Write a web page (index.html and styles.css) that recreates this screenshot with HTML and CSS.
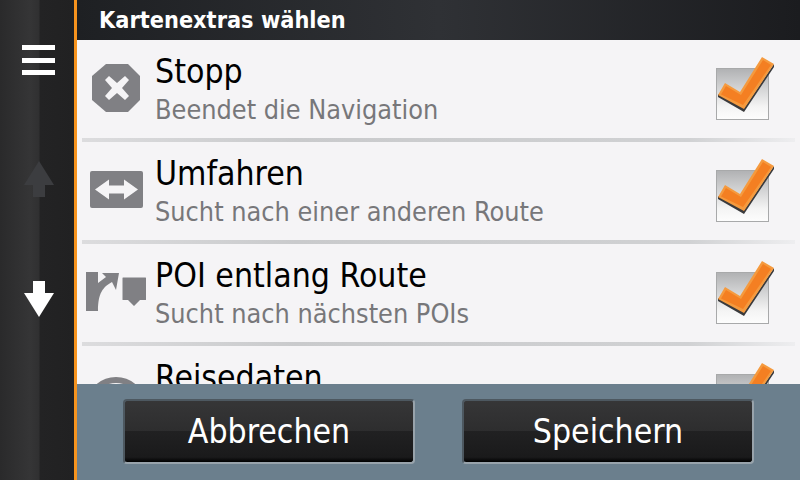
FILE: index.html
```html
<!DOCTYPE html>
<html lang="de">
<head>
<meta charset="utf-8">
<title>Kartenextras wählen</title>
<link rel="stylesheet" href="styles.css">
</head>
<body>
<svg class="defs" width="0" height="0">
  <defs>
    <linearGradient id="b" x1="0" y1="0" x2="0" y2="1"><stop offset="0" stop-color="#b0b1b3"/><stop offset="0.75" stop-color="#f4f4f4"/><stop offset="1" stop-color="#fdfdfd"/></linearGradient>
    <symbol id="check" viewBox="0 0 62 66">
      <rect x="2.500" y="13.500" width="52" height="51" fill="url(#b)" stroke="#a8a9aa"/>
      <path d="M4 39L4 42L30 57L60 12L60 9L30 53Z" fill="#3a3a3c"/>
      <path d="M4 40L11 28L26 37L48 2L60 9L30 54Z" fill="#f59a3e"/>
      <path d="M7 39.500L12 31L27 40L49 5L57 10L29 50Z" fill="#f47f22"/>
    </symbol>
  </defs>
</svg>
<div class="app">
  <aside class="side">
    <div class="menu"><span></span><span></span><span></span></div>
    <svg class="arrow up" width="30" height="36" viewBox="0 0 30 36"><path d="M15 0L30 24H21V36H9V24H0Z" fill="#3c3d40"/></svg>
    <svg class="arrow down" width="30" height="36" viewBox="0 0 30 36"><path d="M9 0H21V12H30L15 36L0 12H9Z" fill="#fff"/></svg>
  </aside>
  <main class="main">
    <header class="head">Kartenextras wählen</header>
    <div class="list">
      <div class="row">
        <svg class="ico" width="60" height="70" viewBox="0 0 60 70"><path d="M21 15H43L55 27V51L43 63H21L7 51V27Z" fill="#808084"/><path d="M24 27L32 34L40 27L44 31L37 39L44 47L40 51L32 44L24 51L20 47L27 39L20 31Z" fill="#f5f4f6"/></svg>
        <div class="txt"><div class="t">Stopp</div><div class="s">Beendet die Navigation</div></div>
        <svg class="chk" width="62" height="66"><use href="#check"/></svg>
      </div>
      <div class="row">
        <svg class="ico" width="60" height="70" viewBox="0 0 60 70"><rect x="5" y="20" width="53" height="37" rx="2" fill="#808084"/><path d="M10 38.500L24 28.500V34.500H39V28.500L53 38.500L39 48.500V42.500H24V48.500Z" fill="#f5f4f6"/></svg>
        <div class="txt"><div class="t">Umfahren</div><div class="s">Sucht nach einer anderen Route</div></div>
        <svg class="chk" width="62" height="66"><use href="#check"/></svg>
      </div>
      <div class="row">
        <svg class="ico wide" width="64" height="70" viewBox="0 0 64 70"><path d="M1 19H13V30L21 24L17 20H34L31 37L27 29C18 34 13 40 13 58H1Z" fill="#808084"/><path d="M38 24.500H60.500Q61 24.500 61 25V46.500Q61 47 60.500 47H55L49 53L43 47H38Q37.500 47 37.500 46.500V25Q37.500 24.500 38 24.500Z" fill="#808084"/></svg>
        <div class="txt"><div class="t">POI entlang Route</div><div class="s">Sucht nach nächsten POIs</div></div>
        <svg class="chk" width="62" height="66"><use href="#check"/></svg>
      </div>
      <div class="row">
        <svg class="ico" width="60" height="90" viewBox="0 0 60 90"><circle cx="31" cy="52" r="27" fill="none" stroke="#808084" stroke-width="6"/></svg>
        <div class="txt"><div class="t">Reisedaten</div></div>
        <svg class="chk" width="62" height="66"><use href="#check"/></svg>
      </div>
    </div>
    <footer class="foot">
      <button class="btn">Abbrechen</button>
      <button class="btn">Speichern</button>
    </footer>
  </main>
</div>
</body>
</html>
```
FILE: styles.css
```css
* { box-sizing: border-box; }
html, body { margin: 0; padding: 0; }
body { width: 800px; height: 480px; overflow: hidden; font-family: "DejaVu Sans Condensed", "DejaVu Sans", sans-serif; font-stretch: condensed; }
.defs { display: block; height: 0; }
.app { display: flex; width: 800px; height: 480px; }
.side {
  width: 77px; flex: none; height: 480px;
  border-right: 3px solid #f7941e;
  background: linear-gradient(90deg, #2a2a2b 0, #353536 30px, #303031 39px, #232324 40px, #212122 74px);
  display: flex; flex-direction: column; align-items: center;
  padding: 45px 0 0 4px;
}
.menu { display: flex; flex-direction: column; gap: 7.5px; width: 33px; margin-right: 2px; }
.menu span { display: block; height: 5px; background: #fff; }
.arrow { display: block; }
.up { margin-top: 86px; }
.down { margin-top: 84px; }
.main { flex: 1; display: flex; flex-direction: column; min-width: 0; height: 480px; }
.head {
  height: 40px; flex: none; padding-left: 22px;
  background: linear-gradient(90deg, #1e2023, #2f3135 50%, #1b1c1f);
  color: #fff; font-weight: bold; font-size: 23.3px; line-height: 39px;
}
.list { flex: 1; min-height: 0; overflow: hidden; background: #f5f4f6; padding: 0 5px; }
.row {
  height: 102px; display: flex; align-items: flex-start;
  border-bottom: 4px solid #cfd0d2;
  border-image: linear-gradient(90deg, #dcdcde, #c9cacc 30%, #d0d1d3 85%, #eeeef0) 1;
}
.ico { flex: none; margin: 9px 0 0 3px; display: block; overflow: visible; }
.ico.wide { margin-right: -4px; }
.txt { flex: 1; min-width: 0; margin-left: 10px; padding-top: 12px; }
.t { font-size: 33.5px; line-height: 40px; color: #000; }
.s { font-size: 26.8px; line-height: 30px; margin-top: 3px; color: #77777a; }
.chk { flex: none; margin: 15px 19px 0 0; display: block; }
.foot {
  height: 96px; flex: none; background: #6b7f8d;
  display: flex; gap: 47px; padding: 15px 0 0 46px;
}
.btn {
  width: 292px; height: 65px; padding: 0;
  border: 2px solid #4d5860; border-bottom-color: #98a3ab; border-right-color: #98a3ab; border-radius: 4px;
  background: linear-gradient(180deg, #363637 0, #2d2d2e 50%, #212122 50%, #1a1a1b 92%, #000 100%);
  color: #fff; font-family: "DejaVu Sans Condensed", "DejaVu Sans", sans-serif; font-stretch: condensed; font-size: 33.5px;
}
```
